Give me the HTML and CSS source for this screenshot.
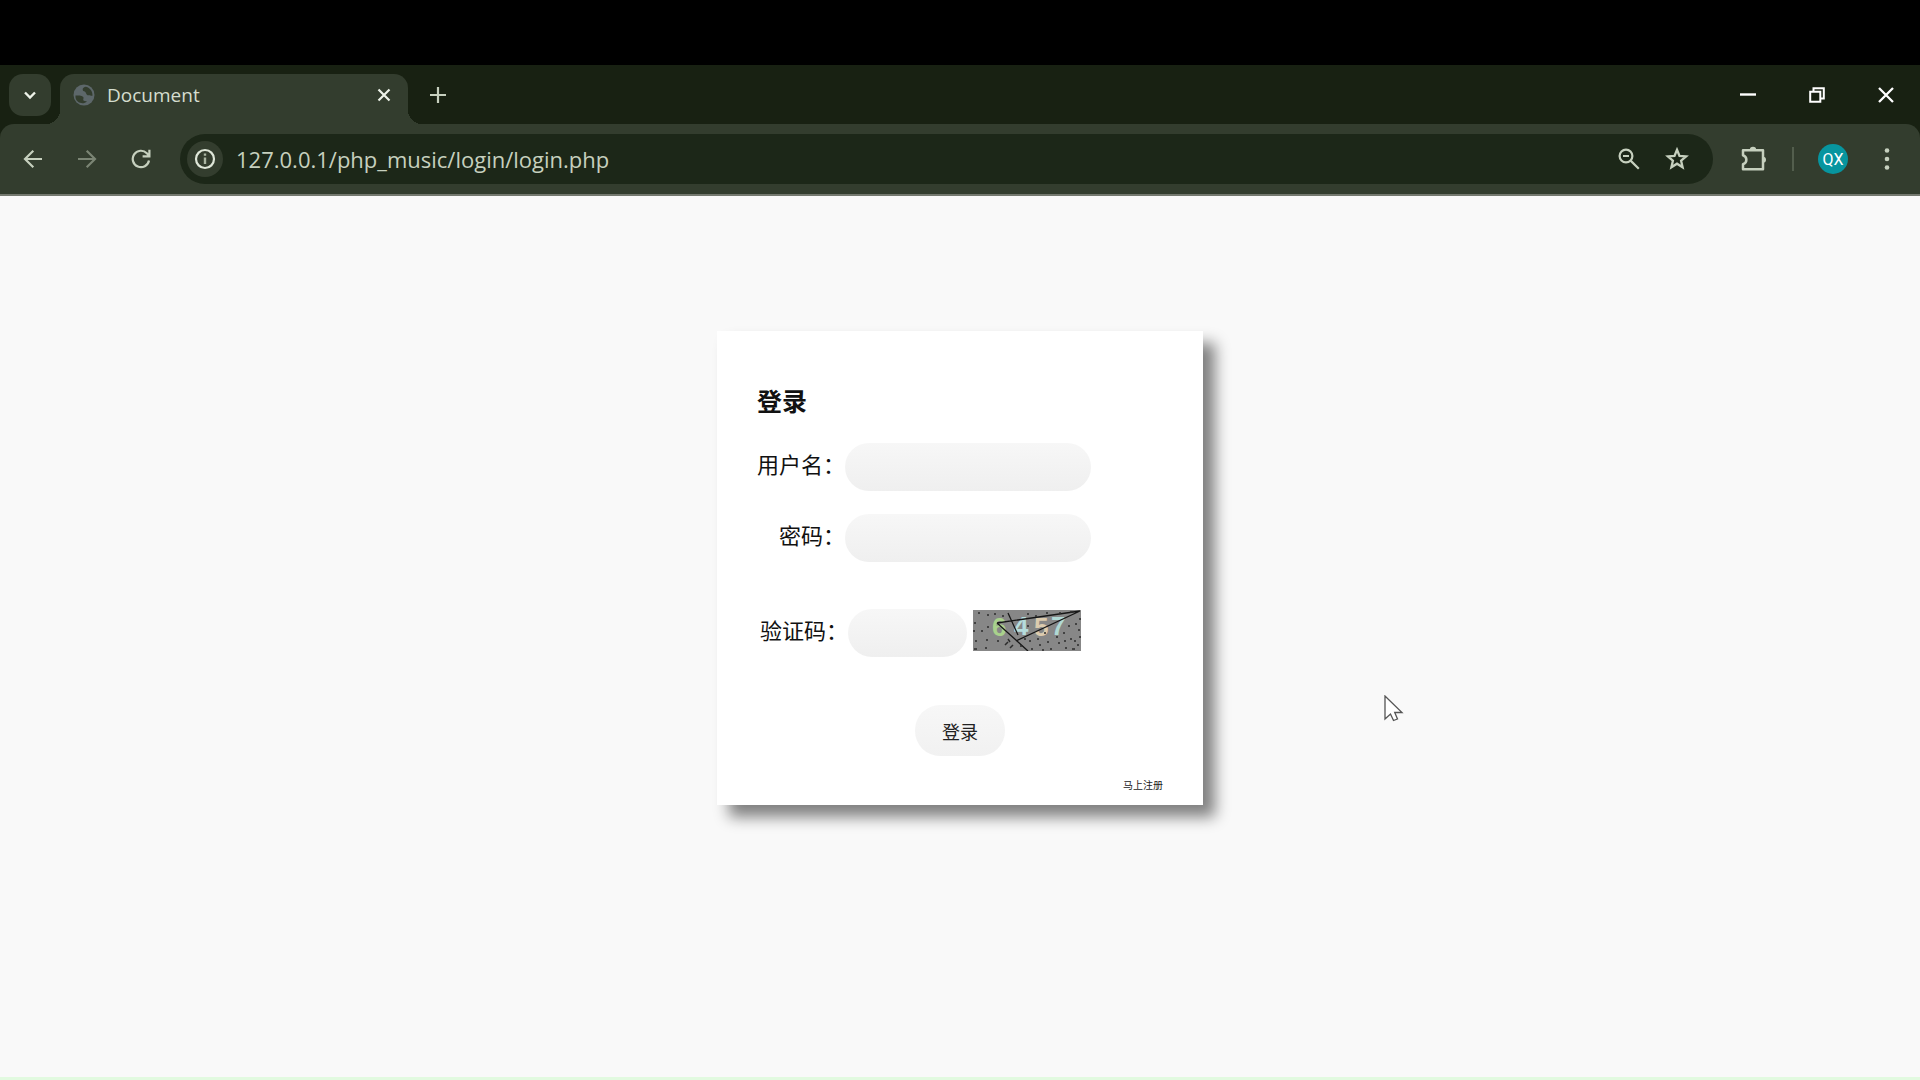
FILE: index.html
```html
<!DOCTYPE html>
<html lang="zh-CN">
<head>
<meta charset="utf-8">
<meta name="viewport" content="width=device-width, initial-scale=1">
<title>Document</title>
<link rel="stylesheet" href="styles.css">
</head>
<body>
<header class="browser">
  <div class="tab-strip">
    <button class="tab-search" type="button" aria-label="Search tabs">
      <svg width="14" height="14" viewBox="0 0 14 14"><path d="M2 4.500l5 5 5-5" fill="none" stroke="currentColor" stroke-width="2.400"/></svg>
    </button>
    <div class="tab">
      <svg class="tab-icon" width="22" height="22" viewBox="0 0 22 22"><circle cx="11" cy="11" r="10.500" fill="#5d676a"/><path d="M2.500 11.500c3 .2 6-.3 7.500 1.200 1.500 1.400-.7 2.800.8 4l3.200.8c-2.600 2.400-6.500 2.200-9 .3-2-1.600-2.800-3.800-2.500-6.300zM12.500 2.800c-2 .3-3 1.700-2.800 3.200.3 1.700 2.500 1 3 2.400.5 1.500 1.200 3 3.200 2.900 1.500 0 2 .7 3.600.4.300-4.500-2.700-8.300-7-8.900z" fill="#333d2e"/></svg>
      <span class="tab-title">Document</span>
      <button class="icon-button tab-close" type="button" aria-label="Close tab">
        <svg width="14" height="14" viewBox="0 0 14 14"><path d="M1.500 1.500l11 11M12.500 1.500l-11 11" stroke="currentColor" stroke-width="2.200"/></svg>
      </button>
    </div>
    <button class="icon-button new-tab" type="button" aria-label="New tab">
      <svg width="16" height="16" viewBox="0 0 16 16"><path d="M8 0v16M0 8h16" stroke="currentColor" stroke-width="2.200"/></svg>
    </button>
    <div class="window-controls">
      <button class="window-button" type="button" aria-label="Minimize">
        <svg width="16" height="16" viewBox="0 0 16 16"><path d="M0 7.500h16" stroke="currentColor" stroke-width="2.400"/></svg>
      </button>
      <button class="window-button" type="button" aria-label="Restore">
        <svg width="16" height="16" viewBox="0 0 16 16"><path d="M1.200 4.700h10.100v10.100H1.200zM4.500 4.500V1.200h10.300v10.300h-3.300" fill="none" stroke="currentColor" stroke-width="2"/></svg>
      </button>
      <button class="window-button" type="button" aria-label="Close">
        <svg width="16" height="16" viewBox="0 0 16 16"><path d="M1 1l14 14M15 1L1 15" stroke="currentColor" stroke-width="2.300"/></svg>
      </button>
    </div>
  </div>
  <div class="toolbar">
    <nav class="history">
      <button class="icon-button" type="button" aria-label="Back">
        <svg width="20" height="20" viewBox="0 0 20 20"><path d="M19 10H2.500M10.300 1.800L2 10l8.300 8.200" fill="none" stroke="currentColor" stroke-width="2.200"/></svg>
      </button>
      <button class="icon-button" type="button" aria-label="Forward" disabled>
        <svg width="20" height="20" viewBox="0 0 20 20"><path d="M1 10h16.500M9.700 1.800L18 10l-8.300 8.200" fill="none" stroke="currentColor" stroke-width="2.200"/></svg>
      </button>
      <button class="icon-button" type="button" aria-label="Reload">
        <svg width="20" height="20" viewBox="0 0 20 20"><path d="M18 11.500A8.200 8.200 0 1 1 15.800 4.200L18 6.500M18.400 .8v6.600h-6.800" fill="none" stroke="currentColor" stroke-width="2.200"/></svg>
      </button>
    </nav>
    <div class="address">
      <button class="site-info" type="button" aria-label="Site information">
        <svg width="22" height="22" viewBox="0 0 22 22"><circle cx="11" cy="11" r="9" fill="none" stroke="currentColor" stroke-width="2.200"/><path d="M11 9.500V16M11 5.500v2.300" stroke="#aab5a2" stroke-width="2.400"/></svg>
      </button>
      <input class="url" type="text" aria-label="Address" value="127.0.0.1/php_music/login/login.php">
      <button class="icon-button" type="button" aria-label="Zoom">
        <svg width="22" height="22" viewBox="0 0 22 22"><circle cx="8" cy="8" r="6.400" fill="none" stroke="currentColor" stroke-width="2.200"/><path d="M5 8h6M12.600 12.600l8.200 8.200" stroke="currentColor" stroke-width="2.200"/></svg>
      </button>
      <button class="icon-button" type="button" aria-label="Bookmark">
        <svg width="24" height="24" viewBox="0 0 24 24"><path d="M12 2.800l2.500 6.100 6.600.5-5 4.300 1.500 6.500-5.600-3.500-5.600 3.500 1.500-6.500-5-4.300 6.600-.5z" fill="none" stroke="currentColor" stroke-width="2.300"/></svg>
      </button>
    </div>
    <div class="actions">
      <button class="icon-button" type="button" aria-label="Extensions">
        <svg width="28" height="28" viewBox="0 0 28 28"><path d="M4 5.200h20v19H4v-5c4.500-1.600 4.500-7.400 0-9z" fill="none" stroke="currentColor" stroke-width="2.500" stroke-linejoin="round"/><path d="M10.800 5a3.200 3.200 0 0 1 6.400 0zM24 11.700a3 3 0 0 1 0 6z" fill="currentColor"/></svg>
      </button>
      <span class="divider"></span>
      <button class="avatar" type="button">QX</button>
      <button class="icon-button" type="button" aria-label="Menu">
        <svg width="6" height="24" viewBox="0 0 6 24"><g fill="currentColor"><circle cx="3" cy="3.500" r="2.300"/><circle cx="3" cy="12" r="2.300"/><circle cx="3" cy="20.500" r="2.300"/></g></svg>
      </button>
    </div>
  </div>
</header>
<main class="page">
  <form class="login">
    <h1 class="login-title">登录</h1>
    <div class="field">
      <label class="field-label" for="username">用户名：</label>
      <input class="field-input" id="username" type="text">
    </div>
    <div class="field">
      <label class="field-label" for="password">密码：</label>
      <input class="field-input" id="password" type="password">
    </div>
    <div class="field field-code">
      <label class="field-label" for="code">验证码：</label>
      <input class="field-input code-input" id="code" type="text">
      <svg class="captcha" width="108" height="41" viewBox="0 0 108 41" role="img">
        <rect width="108" height="41" fill="#878787"/>
        <g class="captcha-text">
          <text x="19" y="26" fill="#a9d18c">6</text>
          <text x="41" y="25" fill="#b5dcdc">4</text>
          <text x="61" y="26" fill="#dccbae">5</text>
          <text x="78" y="25" fill="#b0d8d4">7</text>
        </g>
        <path d="M24 13L107 1M24 13l31 28M35 3l10 22M43 31L107 1" fill="none" stroke="#161616" stroke-width="1.300"/>
        <path d="M2 12v2M1 20v2M2 31h2M1 39h3M12 38h2M14 5h2M8 21h2M13 30h2M21 4h2M29 6h2M32 35l3-3M37 38l3-3M37 32l-2-3M47 36h2M51 29h2M56 31h2M64 29h2M58 39h2M66 35h2M69 40h2M74 32h2M77 39h2M83 27h2M85 33h2M92 38h2M90 23h2M97 29h2M101 31h2M99 39h3M104 35h2M105 20h2M102 14h2M106 9h2M95 16h2M97 2h3M86 3h2M54 4h2M62 6h2M73 3h2M54 16h2M71 23h2M14 17h2M5 3h2M24 31h2M106 27h2M91 31h2" stroke="#2c2c2c" stroke-width="1.500"/>
      </svg>
    </div>
    <button class="submit" type="submit">登录</button>
    <a class="register" href="#">马上注册</a>
  </form>
</main>
<svg class="pointer" width="20" height="30" viewBox="0 0 20 30"><path d="M1 1v23l5.500-5 3 6.500 4-1.500-2.800-6.500H18z" fill="#fff" stroke="#555" stroke-width="1.300"/></svg>
</body>
</html>
```
FILE: styles.css
```css
* { box-sizing: border-box; }

body {
  display: flex;
  flex-direction: column;
  min-height: 100vh;
  margin: 0;
  background: #f9f9f9;
  font-family: "Noto Sans CJK SC", sans-serif;
  color: #111;
}

button, input {
  border: 0;
  padding: 0;
  font: inherit;
}

svg { display: block; }

/* Browser window */
.browser {
  border-top: 65px solid #000;
  border-bottom: 2px solid #74796f;
  background: #182112;
  color: #c6d0be;
  font-family: "Open Sans", "Noto Sans", sans-serif;
}

.tab-strip {
  display: flex;
  height: 59px;
  padding: 9px 0 0 9px;
}

.icon-button {
  display: grid;
  place-items: center;
  flex: none;
  width: 48px;
  height: 42px;
  background: none;
  color: inherit;
}

.icon-button:disabled { color: #7b8574; }

.tab-search {
  display: grid;
  place-items: center;
  width: 42px;
  height: 42px;
  margin-right: 9px;
  border-radius: 14px;
  background: #333d2e;
  color: #eef3e9;
}

.tab {
  position: relative;
  display: flex;
  align-items: center;
  width: 348px;
  padding: 0 0 8px 13px;
  border-radius: 14px 14px 0 0;
  background: #333d2e;
}

.tab::before,
.tab::after {
  content: "";
  position: absolute;
  bottom: 0;
  width: 14px;
  height: 14px;
}

.tab::before {
  right: 100%;
  background: radial-gradient(circle at 0 0, transparent 14px, #333d2e 14px);
}

.tab::after {
  left: 100%;
  background: radial-gradient(circle at 100% 0, transparent 14px, #333d2e 14px);
}

.tab-title {
  flex: 1;
  padding-left: 12px;
  font-size: 19px;
  line-height: 28px;
  color: #d5ddcf;
}

.tab-close { color: #eef3e9; }

.new-tab { margin-left: 6px; }

.window-controls {
  display: flex;
  margin-left: auto;
}

.window-button {
  display: grid;
  place-items: center;
  width: 69px;
  height: 42px;
  background: none;
  color: #fff;
}

.toolbar {
  display: flex;
  align-items: center;
  height: 70px;
  padding: 0 9px;
  border-radius: 14px 14px 0 0;
  background: #333d2e;
}

.history {
  display: flex;
  gap: 6px;
  margin-right: 15px;
}

.address {
  display: flex;
  align-items: center;
  flex: 1;
  height: 50px;
  padding: 0 12px 0 7px;
  border-radius: 25px;
  background: #1c2718;
}

.site-info {
  display: grid;
  place-items: center;
  width: 36px;
  height: 36px;
  border-radius: 50%;
  background: #333d2e;
  color: #dfe7d9;
}

.url {
  flex: 1;
  min-width: 0;
  height: 36px;
  padding-left: 13px;
  background: none;
  color: #c6d0be;
  font-size: 22px;
}

.actions {
  display: flex;
  align-items: center;
  margin-left: 16px;
}

.divider {
  width: 2px;
  height: 24px;
  margin: 0 24px 0 15px;
  background: #535e4d;
}

.avatar {
  width: 30px;
  height: 30px;
  margin-right: 15px;
  border-radius: 50%;
  background: #07959f;
  color: #fff;
  font-family: Roboto, sans-serif;
  font-size: 16px;
}

/* Login page */
.page {
  flex: 1;
  padding: 135px 16px 48px;
  border-bottom: 3px solid #e2fae0;
}

.login {
  display: flex;
  flex-direction: column;
  max-width: 486px;
  margin: 0 auto;
  padding: 50px 40px 10px;
  background: #fff;
  box-shadow: 12px 12px 14px #808080;
}

.login-title {
  margin: 0 0 24px;
  font-size: 25px;
  line-height: 38px;
}

.field {
  display: flex;
  align-items: center;
  margin-bottom: 23px;
}

.field-label {
  flex: none;
  width: 88px;
  padding-bottom: 8px;
  font-size: 22px;
  line-height: 32px;
  text-align: right;
  white-space: nowrap;
}

.field-input {
  width: 246px;
  height: 48px;
  padding: 0 20px;
  border-radius: 25px;
  background: linear-gradient(#f7f7f7, #efefef);
  font-size: 18px;
}

.field-code {
  margin-top: 24px;
  padding-left: 3px;
}

.code-input { width: 119px; }

.captcha { margin: 0 0 6px 6px; }

.captcha-text {
  font-family: "Liberation Sans", sans-serif;
  font-size: 26px;
  font-weight: 700;
}

.submit {
  align-self: center;
  width: 90px;
  height: 51px;
  margin-top: 25px;
  border-radius: 25px;
  background: linear-gradient(#f7f7f7, #f1f1f1);
  color: #222;
  font-size: 18px;
}

.register {
  align-self: flex-end;
  margin-top: 19px;
  color: #222;
  font-size: 10px;
  line-height: 20px;
  text-decoration: none;
}

.pointer {
  position: absolute;
  top: 695px;
  left: 1384px;
}
```
